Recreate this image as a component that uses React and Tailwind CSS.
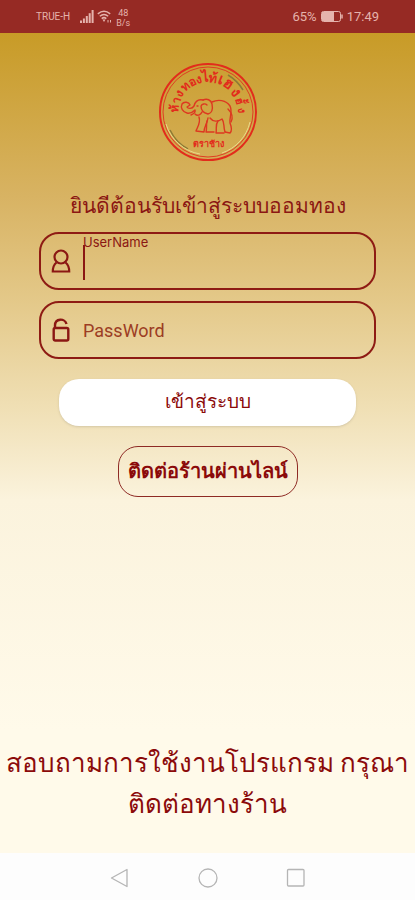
import React from "react";

const SignalIcon = () => (
  <svg viewBox="0 0 14 13" className="w-[14px] h-[13px]" fill="currentColor">
    <rect x="0" y="10.500" width="2" height="2.500" />
    <rect x="2.900" y="8.500" width="2" height="4.500" />
    <rect x="5.800" y="6" width="2" height="7" />
    <rect x="8.700" y="3.200" width="2" height="9.800" />
    <rect x="11.600" y="0" width="2" height="13" />
  </svg>
);

const WifiIcon = () => (
  <svg viewBox="0 0 15 13" className="w-[15px] h-[13px]" fill="none" stroke="currentColor" strokeWidth="1.500">
    <path d="M0.800 3.800 Q7 -1.200 13.200 3.800" />
    <path d="M2.800 6.300 Q7 2.700 11.200 6.300" />
    <path d="M4.700 8.600 Q7 6.600 9.300 8.600" />
    <path d="M5.500 9.500 H8.500 L7 12 Z" fill="currentColor" stroke="none" />
    <path d="M11 10 V12.500 M13.500 10 V12.500" strokeWidth="1" />
  </svg>
);

const BatteryIcon = () => (
  <svg viewBox="0 0 22 11" className="w-[22px] h-[11px]" fill="none" stroke="currentColor">
    <rect x="0.500" y="0.500" width="19" height="10" rx="2" />
    <rect x="1" y="1" width="12" height="9" fill="currentColor" stroke="none" />
    <path d="M21 3.500 V7.500" strokeWidth="1.500" />
  </svg>
);

const StatusBar = () => (
  <header className="flex h-[33px] shrink-0 items-center justify-between bg-[#962a24] px-9 text-[#e5b3ac]">
    <div className="flex items-center">
      <span className="mr-[10px] text-[10px]">TRUE-H</span>
      <SignalIcon />
      <span className="ml-[3px] mr-1">
        <WifiIcon />
      </span>
      <span className="pt-[2px] text-center text-[9px] leading-[10px]">
        48
        <br />
        B/s
      </span>
    </div>
    <div className="flex items-center gap-1 text-[13px]">
      <span>65%</span>
      <BatteryIcon />
      <span>17:49</span>
    </div>
  </header>
);

// shop name set round the top of the seal
const sealLetters = [
  { char: "ห้", angle: -84, size: 12 },
  { char: "า", angle: -70, size: 12 },
  { char: "ง", angle: -57, size: 12 },
  { char: "ท", angle: -42, size: 12 },
  { char: "อ", angle: -28, size: 12 },
  { char: "ง", angle: -16, size: 12 },
  { char: "ไ", angle: -5, size: 14 },
  { char: "ท้", angle: 8, size: 13 },
  { char: "เ", angle: 22, size: 15 },
  { char: "ฮ", angle: 35, size: 15 },
  { char: "ง", angle: 54, size: 15 },
  { char: "ฮั้", angle: 72, size: 11 },
  { char: "ง", angle: 87, size: 11 },
];

const Logo = () => (
  <svg viewBox="0 0 100 100" className="size-[100px]" fill="none" role="img" aria-label="ตราช้าง">
    <circle cx="50" cy="50" r="48" stroke="#e22c1c" strokeWidth="2" />
    <circle cx="50" cy="50" r="45" stroke="#df3d22" strokeWidth="1" />
    <path d="M12 68 A42 42 0 0 0 30 87" stroke="#8c7b35" strokeWidth="1.500" />
    <path d="M70 13 A43 43 0 0 1 85 28" stroke="#8c7b35" strokeWidth="1.500" />
    <path d="M8 62 A43 43 0 0 0 42 92 M92 60 A43 43 0 0 1 64 91" stroke="#ecd98a" strokeWidth="1" />
    <g fill="#e22c1c" fontWeight="700" textAnchor="middle">
      {sealLetters.map(({ char, angle, size }) => (
        <text key={angle} x="50" y="20" fontSize={size} transform={`rotate(${angle} 50 50)`}>
          {char}
        </text>
      ))}
      <text x="50" y="85" fontSize="9">
        ตราช้าง
      </text>
    </g>
    {/* elephant */}
    <g stroke="#dd3820" strokeWidth="1.400" strokeLinecap="round" strokeLinejoin="round">
      <path d="M45 38 C40 37 37 40 36 44 C34 47 30 47 29 45 L32 43 C31 40 26 39 24 42 C22 46 25 50 29 51 C33 52 35 50 37 48 C38 51 35 52 33 53" />
      <path d="M37 52 C40 55 43 52 44 50" />
      <path d="M45 38 C49 36 53 38 54 42 C55 47 54 51 50 52 C46 51 43 48 43 44 C44 42 47 41 49 43" />
      <path d="M54 40 C60 37 68 38 72 44 C75 50 71 56 72 61 C74 66 74 69 72 71 L67 70" />
      <path d="M70 47 C74 51 75 56 73 60" />
      <path d="M41 55 C43 61 39 66 38 69 L46 70 C46 65 49 62 50 56" />
      <path d="M49 59 C48 64 49 67 48 70 L56 70" />
      <path d="M52 56 C55 60 60 60 64 57 C67 61 65 64 67 70" />
      <path d="M60 59 C57 63 59 66 58 71 L66 71" />
      <path d="M39 44 H40" />
    </g>
  </svg>
);

const UserIcon = () => (
  <svg viewBox="0 0 20 24" className="h-6 w-5 shrink-0" fill="none" stroke="currentColor" strokeWidth="2.200">
    <circle cx="10" cy="8" r="6.500" />
    <path d="M5.500 13.500 C3 15.500 1.800 18 1.800 22.500 H18.200 C18.200 18 17 15.500 14.500 13.500" />
  </svg>
);

const LockIcon = () => (
  <svg viewBox="0 0 20 24" className="h-6 w-5 shrink-0" fill="none" stroke="currentColor" strokeWidth="2.400">
    <rect x="2.700" y="10" width="14.600" height="12.500" rx="1.500" />
    <path d="M4 10 V7.500 C4 0 14 0 15.500 6" />
  </svg>
);

const App = () => {
  return (
    <div className="flex min-h-screen flex-col font-[Roboto,'Noto_Sans',sans-serif] text-[#8b1713]">
      <StatusBar />

      <main className="flex grow flex-col items-center bg-linear-[180deg,#c89b27_0%,#d8b363_20%,#e4c98a_33%,#efdeb2_45%,#fbf3dd_57%,#fffaea_85%] pt-[29px]">
        <Logo />
        <h1 className="mt-7 text-[21px] leading-8">ยินดีต้อนรับเข้าสู่ระบบออมทอง</h1>

        <form className="mt-[10px] flex w-full flex-col px-[39px]" onSubmit={(e) => e.preventDefault()}>
          <div className="relative flex h-[58px] items-center rounded-[20px] border-2 border-[#8e1b14] pl-[10px]">
            <UserIcon />
            <label htmlFor="username" className="absolute left-[42px] top-0 font-[Inter,sans-serif] text-[13px] leading-4">
              UserName
            </label>
            <span className="absolute left-[42px] top-[11px] h-[35px] w-[2px] bg-[#8b1713]" />
            <input id="username" type="text" className="ml-3 h-full min-w-0 grow bg-transparent text-lg caret-transparent outline-none" />
          </div>
          <div className="mt-[11px] flex h-[58px] items-center rounded-[20px] border-2 border-[#8e1b14] pl-[10px]">
            <LockIcon />
            <input
              type="password"
              aria-label="PassWord"
              placeholder="PassWord"
              className="ml-3 h-full min-w-0 grow bg-transparent text-lg outline-none placeholder:text-[#9c3d24]"
            />
          </div>
          <button type="submit" className="mx-5 mt-5 h-[47px] rounded-[20px] bg-white text-[19px] text-[#8b0a0a] shadow-sm">
            เข้าสู่ระบบ
          </button>
        </form>

        <button type="button" className="mt-5 h-[51px] rounded-[20px] border border-[#8e2a24] px-[9px] pb-[2px] text-xl font-bold text-[#8b0a0a]">
          ติดต่อร้านผ่านไลน์
        </button>

        <p className="mt-auto pb-7 text-center text-[26px] font-medium leading-[41px] text-[#8b0a0a]">
          สอบถามการใช้งานโปรแกรม กรุณา
          <br />
          ติดต่อทางร้าน
        </p>
      </main>

      <nav className="flex h-[47px] shrink-0 items-center justify-center gap-[68px] bg-[#fdfdfd] pt-[2px] text-[#b5b5b5]">
        <button type="button" aria-label="Back">
          <svg viewBox="0 0 20 20" className="size-5" fill="none" stroke="currentColor" strokeWidth="1.300">
            <path d="M17 1.500 V18.500 L1.500 10 Z" strokeLinejoin="round" />
          </svg>
        </button>
        <button type="button" aria-label="Home">
          <svg viewBox="0 0 20 20" className="size-5" fill="none" stroke="currentColor" strokeWidth="1.300">
            <circle cx="10" cy="10" r="9" />
          </svg>
        </button>
        <button type="button" aria-label="Recents">
          <svg viewBox="0 0 20 20" className="size-5" fill="none" stroke="currentColor" strokeWidth="1.300">
            <rect x="1.500" y="1.500" width="16.500" height="16.500" rx="1" />
          </svg>
        </button>
      </nav>
    </div>
  );
};

export default App;
